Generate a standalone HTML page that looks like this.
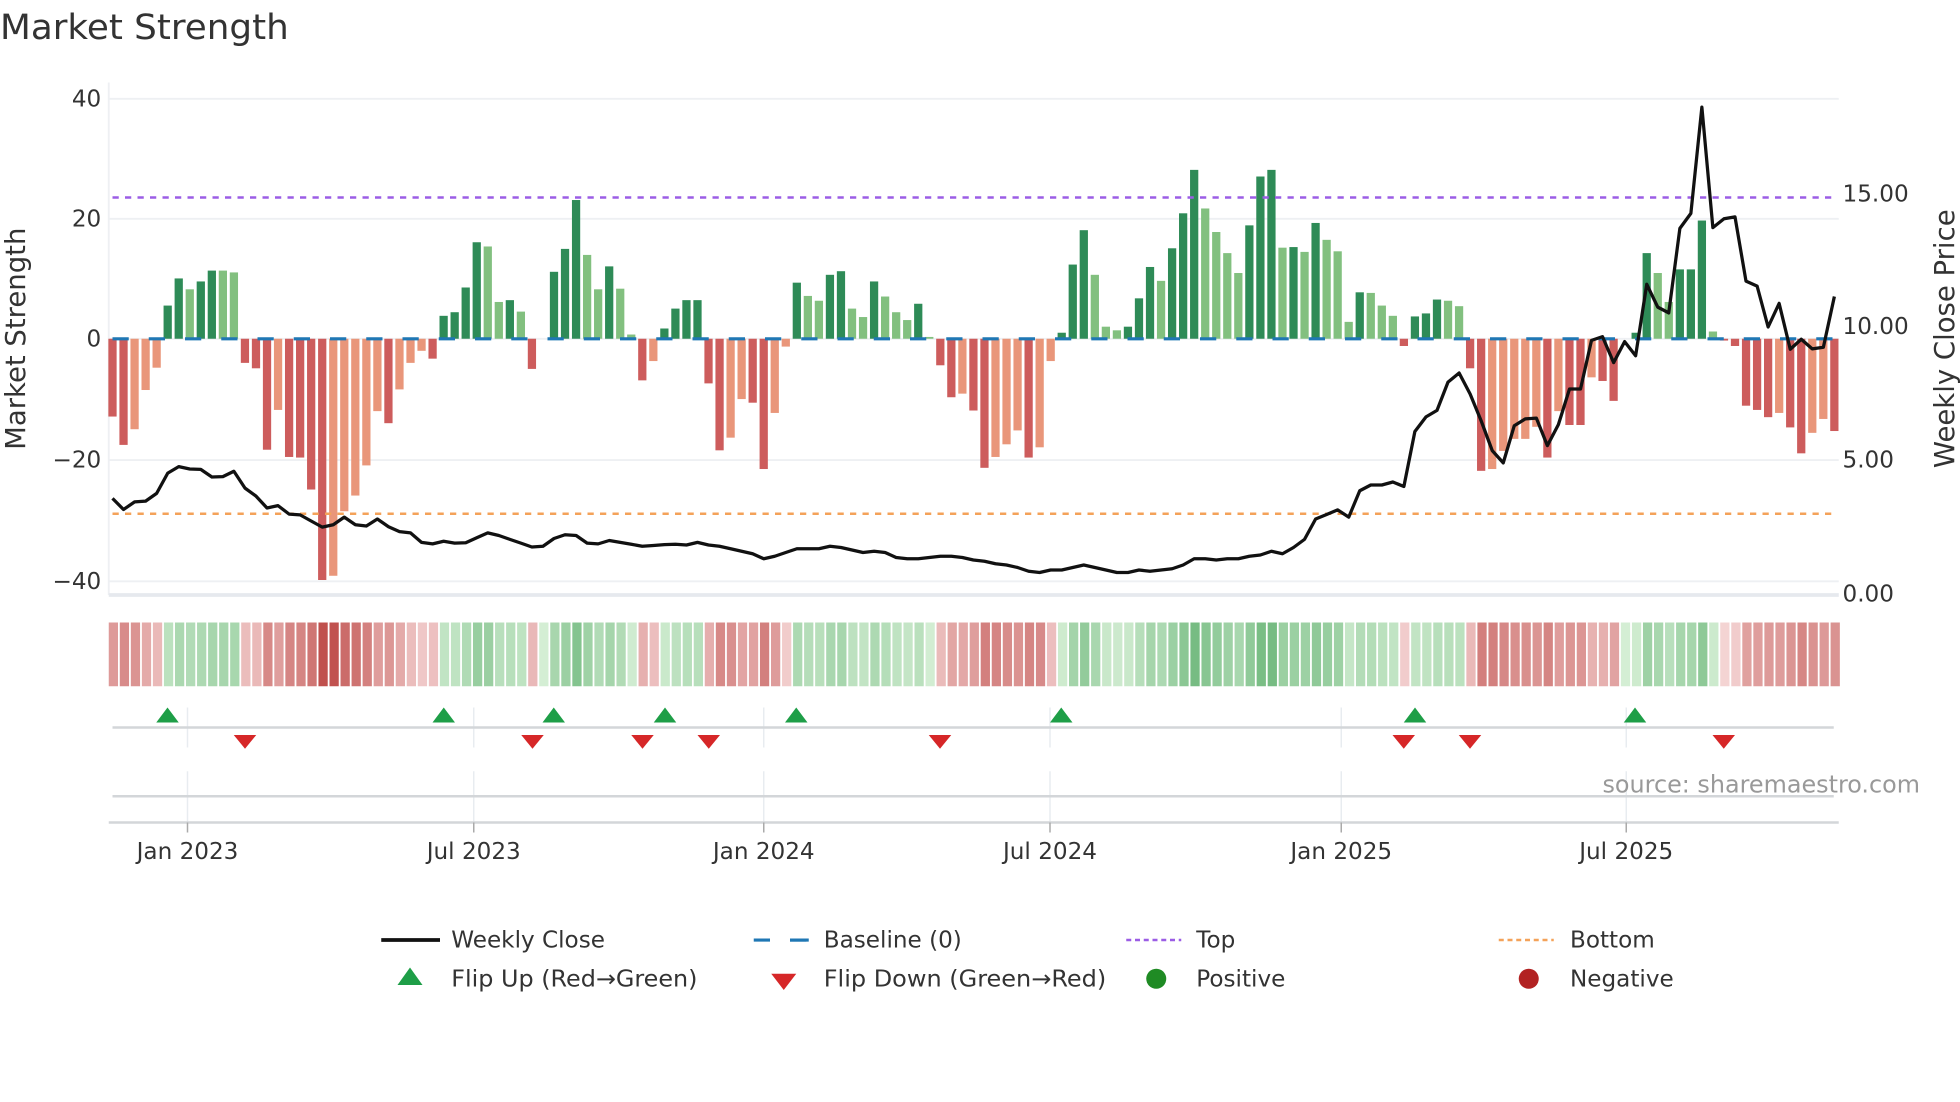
<!DOCTYPE html>
<html><head><meta charset="utf-8"><style>
html,body{margin:0;padding:0;background:#fff;}
svg{display:block;font-family:"DejaVu Sans","Liberation Sans",sans-serif;}
</style></head><body>
<svg id="s" width="1960" height="1102" viewBox="0 0 1568 881.6" xmlns="http://www.w3.org/2000/svg">
<rect width="1568" height="882" fill="#fff"/>
<text x="0" y="31" font-size="28" fill="#333" textLength="231" lengthAdjust="spacingAndGlyphs">Market Strength</text>
<g stroke="#eef0f3" stroke-width="1.5">
<line x1="87" x2="1471" y1="79" y2="79"/><line x1="87" x2="1471" y1="175" y2="175"/>
<line x1="87" x2="1471" y1="271" y2="271"/><line x1="87" x2="1471" y1="368" y2="368"/>
<line x1="87" x2="1471" y1="465" y2="465"/>
</g>
<line x1="87" x2="87" y1="66" y2="476" stroke="#eef0f3" stroke-width="1.5"/>
<line x1="87" x2="1471" y1="476" y2="476" stroke="#e6e9ee" stroke-width="3"/>
<g font-size="18.5" fill="#333" text-anchor="end">
<text x="81" y="85">40</text><text x="81" y="181">20</text><text x="81" y="277">0</text>
<text x="81" y="374">−20</text><text x="81" y="471">−40</text>
</g>
<g font-size="18.5" fill="#333">
<text x="1474" y="161">15.00</text><text x="1474" y="267">10.00</text>
<text x="1474" y="374">5.00</text><text x="1474" y="481">0.00</text>
</g>
<text transform="translate(20,271) rotate(-90)" font-size="22" fill="#333" text-anchor="middle">Market Strength</text>
<text transform="translate(1563,271) rotate(-90)" font-size="22" fill="#333" text-anchor="middle">Weekly Close Price</text>
<g id="bars"></g>
<line x1="90" x2="1468" y1="271" y2="271" stroke="#1f77b4" stroke-width="2.5" stroke-dasharray="13 16"/>
<line x1="90" x2="1468" y1="158" y2="158" stroke="#9b5de5" stroke-width="2" stroke-dasharray="5 5"/>
<line x1="90" x2="1468" y1="411" y2="411" stroke="#f4a259" stroke-width="2" stroke-dasharray="5 5"/>
<polyline id="close" fill="none" stroke="#111" stroke-width="2.6" stroke-linejoin="round"/>
<g id="strip"></g>
<g stroke="#e8ecf0" stroke-width="1.2">
<line x1="150" x2="150" y1="566" y2="598"/><line x1="379" x2="379" y1="566" y2="598"/>
<line x1="611" x2="611" y1="566" y2="598"/><line x1="840" x2="840" y1="566" y2="598"/>
<line x1="1073" x2="1073" y1="566" y2="598"/><line x1="1301" x2="1301" y1="566" y2="598"/>
<line x1="150" x2="150" y1="617" y2="658"/><line x1="379" x2="379" y1="617" y2="658"/>
<line x1="611" x2="611" y1="617" y2="658"/><line x1="840" x2="840" y1="617" y2="658"/>
<line x1="1073" x2="1073" y1="617" y2="658"/><line x1="1301" x2="1301" y1="617" y2="658"/>
</g>
<line x1="90" x2="1467" y1="582" y2="582" stroke="#d3d6d9" stroke-width="2"/>
<line x1="90" x2="1467" y1="637" y2="637" stroke="#d3d6d9" stroke-width="2"/>
<line x1="87" x2="1471" y1="658" y2="658" stroke="#d3d6d9" stroke-width="2"/>
<g stroke="#aaa" stroke-width="1.2">
<line x1="150" x2="150" y1="658" y2="666"/><line x1="379" x2="379" y1="658" y2="666"/>
<line x1="611" x2="611" y1="658" y2="666"/><line x1="840" x2="840" y1="658" y2="666"/>
<line x1="1073" x2="1073" y1="658" y2="666"/><line x1="1301" x2="1301" y1="658" y2="666"/>
</g>
<g id="flips"></g>
<text x="1536" y="634" font-size="19" fill="#999" text-anchor="end" textLength="254" lengthAdjust="spacingAndGlyphs">source: sharemaestro.com</text>
<g font-size="18.5" fill="#333" text-anchor="middle">
<text x="150" y="687">Jan 2023</text><text x="379" y="687">Jul 2023</text>
<text x="611" y="687">Jan 2024</text><text x="840" y="687">Jul 2024</text>
<text x="1073" y="687">Jan 2025</text><text x="1301" y="687">Jul 2025</text>
</g>
<g font-size="18.5" fill="#333">
<line x1="305" x2="352" y1="752" y2="752" stroke="#111" stroke-width="3"/>
<text x="361" y="758">Weekly Close</text>
<line x1="603" x2="647" y1="752" y2="752" stroke="#1f77b4" stroke-width="2.5" stroke-dasharray="13 16"/>
<line x1="632" x2="647" y1="752" y2="752" stroke="#1f77b4" stroke-width="2.5"/>
<text x="659" y="758">Baseline (0)</text>
<line x1="901" x2="945" y1="752" y2="752" stroke="#9b5de5" stroke-width="2" stroke-dasharray="4 3"/>
<text x="957" y="758">Top</text>
<line x1="1199" x2="1243" y1="752" y2="752" stroke="#f4a259" stroke-width="2" stroke-dasharray="4 3"/>
<text x="1256" y="758">Bottom</text>
<polygon points="328,774 338,788 318,788" fill="#1e9e47"/>
<text x="361" y="789" textLength="197" lengthAdjust="spacingAndGlyphs">Flip Up (Red→Green)</text>
<polygon points="617,779 637,779 627,792" fill="#d62728"/>
<text x="659" y="789" textLength="226" lengthAdjust="spacingAndGlyphs">Flip Down (Green→Red)</text>
<circle cx="925" cy="783" r="8" fill="#1f8b24"/>
<text x="957" y="789">Positive</text>
<circle cx="1223" cy="783" r="8" fill="#b22222"/>
<text x="1256" y="789">Negative</text>
</g>
</svg>
<script>
var V=[-12.9,-17.6,-15,-8.5,-4.8,5.5,10,8.2,9.5,11.3,11.3,11,-4,-4.9,-18.4,-11.8,-19.6,-19.7,-25,-40,-39.3,-28.6,-26,-21,-12,-14,-8.4,-4,-2,-3.3,3.8,4.4,8.5,16,15.3,6.1,6.4,4.5,-5,0,11.1,14.9,23,13.9,8.2,12,8.3,0.7,-6.9,-3.7,1.7,5,6.4,6.4,
-7.4,-18.5,-16.4,-10,-10.6,-21.6,-12.3,-1.3,9.3,7.1,6.3,10.6,11.2,5,3.6,9.5,7,4.4,3.1,5.8,0.3,-4.4,-9.7,-9.1,-11.9,-21.4,-19.6,-17.5,-15.2,-19.7,-18,-3.7,1,12.3,18,10.6,2,1.4,2,6.7,11.9,9.6,15,20.8,28,21.6,17.7,14.2,10.9,18.8,26.9,28,15.1,15.2,
14.4,19.2,16.4,14.5,2.8,7.7,7.6,5.5,3.8,-1.2,3.7,4.2,6.5,6.3,5.4,-4.9,-21.9,-21.6,-18.6,-16.6,-16.6,-14.6,-19.7,-12,-14.3,-14.3,-6.4,-7,-10.3,0,1,14.2,10.9,6.1,11.5,11.5,19.6,1.2,-0.3,-1.2,-11.1,-11.8,-13,-12.3,-14.7,-19,-15.6,-13.3,-15.3];
var DL=[1,1,0,0,0,1,1,0,1,1,0,0,1,1,1,0,1,1,1,1,0,0,0,0,0,1,0,0,0,1,1,1,1,1,0,0,1,0,1,1,1,1,1,0,0,1,0,0,1,0,1,1,1,1,
1,1,0,0,1,1,0,0,1,0,0,1,1,0,0,1,0,0,0,1,0,1,1,0,1,1,0,0,0,1,0,0,1,1,1,0,0,0,1,1,1,0,1,1,1,0,0,0,0,1,1,1,0,1,
0,1,0,0,0,1,0,0,0,1,1,1,1,0,0,1,1,0,0,0,0,0,1,0,1,1,0,1,1,0,1,1,0,0,1,1,1,0,1,1,1,1,1,0,1,1,0,0,1];
var Y=[398.7,407.6,401.5,400.9,394.7,378.5,373.3,375.2,375.5,381.6,381.3,377,390.5,396.9,406.4,404.5,411.3,411.9,416.8,421.7,419.8,413.7,419.8,420.8,415.2,421.4,425.3,426.3,433.9,435.1,433,434.5,434.2,430.2,426.3,428.4,431.5,434.5,437.6,437,430.8,427.8,428.4,434.5,435.1,432.4,433.9,435.4,437,436.4,435.7,435.4,436,433.9,
436,437,439,441,443,447,445,442,439,439,439,437,438,440,442,441,442,446,447,447,446,445,445,446,448,449,451,452,454,457,458,456,456,454,452,454,456,458,458,456,457,456,455,452,447,447,448,447,447,445,444,441,443,438,
431.5,415.2,411.6,407.9,413.7,392.6,388,388,385.6,389.2,345.2,333.5,328.3,305.7,298.4,315.2,336.6,360.5,370.3,340.6,335.1,334.5,356.5,339.7,311.2,311.2,272.3,269.3,290.1,273.3,284.6,227.4,245.7,250.3,182.7,170.7,85.7,182.1,175,173.5,224.9,228.9,261.6,242.7,279.4,271.4,279.1,277.8,237.2];
var NS="http://www.w3.org/2000/svg";
function el(t,a,p){var e=document.createElementNS(NS,t);for(var k in a)e.setAttribute(k,a[k]);p.appendChild(e);return e;}
var bars=document.getElementById("bars"),strip=document.getElementById("strip");
var n=V.length,pts=[];
function mix(a,b,t){var r=[];for(var i=0;i<3;i++)r.push(Math.round(a[i]+(b[i]-a[i])*t));return "rgb("+r.join(",")+")";}
for(var i=0;i<n;i++){
 var x=90+i*8.83,v=V[i],h=Math.abs(v)*4.825,dk=DL[i]===1;
 var c=v>=0?(dk?"#2e8b57":"#82c07f"):(dk?"#cd5c5c":"#e9967a");
 if(h>0.3) el("rect",{x:(x-3.3).toFixed(2),y:(v>=0?271-h:271).toFixed(2),width:6.6,height:h.toFixed(2),fill:c},bars);
 pts.push(x.toFixed(1)+","+(Y[i]||Y[Y.length-1]));
 var t=Math.min(Math.abs(v)/40,1);
 var sc=v>=0?mix([212,238,212],[88,172,104],Math.pow(t,0.8)):mix([246,216,216],[192,80,77],Math.pow(t,0.7));
 el("rect",{x:(87+i*8.83).toFixed(2),y:498,width:7.4,height:51,fill:sc},strip);
}
document.getElementById("close").setAttribute("points",pts.join(" "));
var fl=document.getElementById("flips");
[134,355,443,532,637,849,1132,1308].forEach(function(x){el("polygon",{points:x+",566 "+(x+9)+",578 "+(x-9)+",578",fill:"#1e9e47"},fl);});
[196,426,514,567,752,1123,1176,1379].forEach(function(x){el("polygon",{points:(x-9)+",588 "+(x+9)+",588 "+x+",599",fill:"#d62728"},fl);});
</script>
</body></html>
